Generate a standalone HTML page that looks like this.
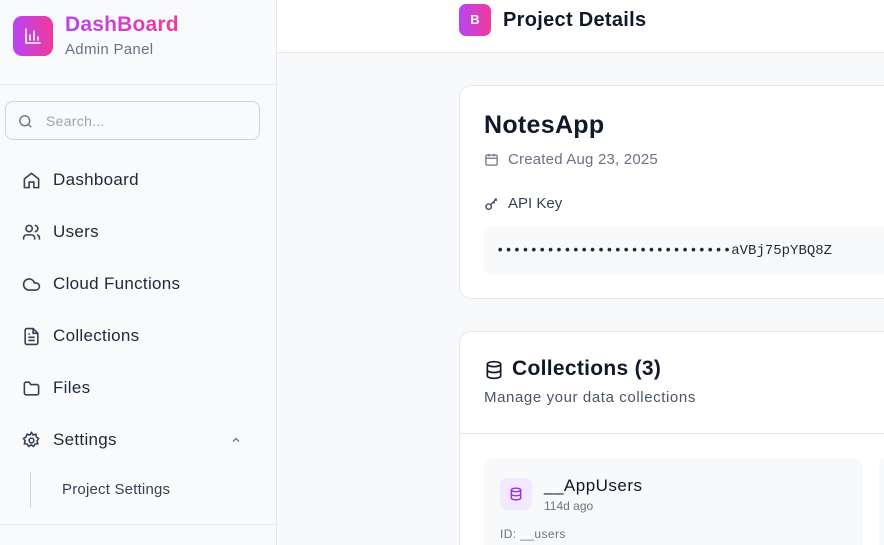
<!DOCTYPE html>
<html style="overflow:hidden;height:545px"><head><style>
*{box-sizing:border-box;margin:0;padding:0}
html,body{width:884px;height:545px;overflow:hidden}
body{font-family:"Liberation Sans",sans-serif;background:#f8f9fb;position:relative;color:#111827}
.sb{position:absolute;left:0;top:0;width:277px;height:545px;background:#f9fafb;border-right:1px solid #e5e7eb}
.logo{position:absolute;left:13px;top:16px;width:40px;height:40px;border-radius:9px;background:linear-gradient(90deg,#b845f5,#f0399b)}
.brand{position:absolute;left:65px;top:13px;font-size:21px;font-weight:bold;background:linear-gradient(90deg,#b845f5,#f0399b);-webkit-background-clip:text;color:transparent;letter-spacing:0.2px}
.sub{position:absolute;left:65px;top:41px;font-size:15px;color:#6b7280;letter-spacing:0.3px}
.hr{position:absolute;left:0;width:276px;height:1px;background:#e5e7eb}
.search{position:absolute;left:5px;top:101px;width:255px;height:39px;border:1px solid #d1d5db;border-radius:8px;background:#f9fafb}
.search span{position:absolute;left:40px;top:11px;font-size:14px;color:#9ca3af;letter-spacing:0.3px}
.nav{position:absolute;left:22px;font-size:17px;color:#1f2937;display:flex;align-items:center;letter-spacing:0.3px}
.nav svg{width:19px;height:19px;margin-right:12px}
.top{position:absolute;left:277px;top:0;right:0;height:53px;background:#fff;border-bottom:1px solid #e5e7eb}
.card{position:absolute;left:459px;width:425px;background:#fff;border:1px solid #e5e7eb;border-right:none;border-radius:12px 0 0 12px}
</style></head><body>
<div class="sb">
<div class="logo"><svg width="40" height="40" viewBox="0 0 40 40" fill="none" stroke="#fff" stroke-width="1.6" stroke-linecap="round"><path d="M13 13v14h14M17 24v-5M21 24v-9M25 24v-3"/></svg></div>
<div class="brand">DashBoard</div>
<div class="sub">Admin Panel</div>
<div class="hr" style="top:84px"></div>
<div class="search"><svg style="position:absolute;left:11px;top:11px" width="17" height="17" viewBox="0 0 24 24" fill="none" stroke="#6b7280" stroke-width="2"><circle cx="11" cy="11" r="7"/><path d="M20 20l-4-4"/></svg><span>Search...</span></div>
<div class="nav" style="top:170px"><svg viewBox="0 0 24 24" fill="none" stroke="#374151" stroke-width="2"><path d="M3 10l9-7 9 7v11h-6v-7H9v7H3z"/></svg>Dashboard</div>
<div class="nav" style="top:222px"><svg viewBox="0 0 24 24" fill="none" stroke="#374151" stroke-width="2"><circle cx="9" cy="7" r="4"/><path d="M2 21v-2a4 4 0 014-4h6a4 4 0 014 4v2M16 3a4 4 0 010 8M22 21v-2a4 4 0 00-3-4"/></svg>Users</div>
<div class="nav" style="top:274px"><svg viewBox="0 0 24 24" fill="none" stroke="#374151" stroke-width="2"><path d="M17.5 19H9a7 7 0 116.7-9h1.8a4.5 4.5 0 010 9z"/></svg>Cloud Functions</div>
<div class="nav" style="top:326px"><svg viewBox="0 0 24 24" fill="none" stroke="#374151" stroke-width="2"><path d="M14 2H6a2 2 0 00-2 2v16a2 2 0 002 2h12a2 2 0 002-2V8z"/><path d="M14 2v6h6M8 13h8M8 17h8M8 9h2"/></svg>Collections</div>
<div class="nav" style="top:378px"><svg viewBox="0 0 24 24" fill="none" stroke="#374151" stroke-width="2"><path d="M3 6a2 2 0 012-2h4l2 3h8a2 2 0 012 2v9a2 2 0 01-2 2H5a2 2 0 01-2-2z"/></svg>Files</div>
<div class="nav" style="top:430px"><svg viewBox="0 0 24 24" fill="none" stroke="#374151" stroke-width="2"><circle cx="12" cy="12" r="3"/><path d="M12 2l2 3 3.5-1 .5 3.5 3 2-2 3 1 3.5-3.5.5-2 3-3-2-3 2-2-3-3.5-.5 1-3.5-2-3 3-2L6.5 4 10 5z"/></svg>Settings</div>
<svg style="position:absolute;left:230px;top:434px" width="12" height="12" viewBox="0 0 24 24" fill="none" stroke="#6b7280" stroke-width="2.5"><path d="M6 15l6-6 6 6"/></svg>
<div style="position:absolute;left:30px;top:472px;width:1px;height:36px;background:#d1d5db"></div>
<div style="position:absolute;left:62px;top:481px;font-size:15px;color:#374151;letter-spacing:0.2px">Project Settings</div>
<div class="hr" style="top:524px"></div>
</div>
<div class="top">
<div style="position:absolute;left:182px;top:4px;width:32px;height:32px;border-radius:7px;background:linear-gradient(90deg,#b845f5,#f0399b);color:#fff;font-size:13px;font-weight:bold;text-align:center;line-height:32px">B</div>
<div style="position:absolute;left:226px;top:9px;font-size:20px;font-weight:bold;letter-spacing:0.3px">Project Details</div>
</div>
<div class="card" style="top:85px;height:214px">
<div style="position:absolute;left:24px;top:25px;font-size:25px;font-weight:bold;letter-spacing:0.3px">NotesApp</div>
<svg style="position:absolute;left:24px;top:66px" width="15" height="15" viewBox="0 0 24 24" fill="none" stroke="#6b7280" stroke-width="2"><rect x="3" y="5" width="18" height="16" rx="2"/><path d="M3 10h18M8 3v4M16 3v4"/></svg>
<div style="position:absolute;left:48px;top:65px;font-size:15px;color:#6b7280;letter-spacing:0.2px">Created Aug 23, 2025</div>
<svg style="position:absolute;left:24px;top:110px" width="16" height="16" viewBox="0 0 24 24" fill="none" stroke="#374151" stroke-width="2"><circle cx="7" cy="16" r="4"/><path d="M10 13l9-9M16 4l3 3M14 9l2 2"/></svg>
<div style="position:absolute;left:48px;top:109px;font-size:15px;color:#374151">API Key</div>
<div style="position:absolute;left:24px;top:141px;width:401px;height:48px;background:#f8f9fb;border-radius:8px 0 0 8px;font-family:'Liberation Mono',monospace;font-size:14px;line-height:48px;padding-left:12px;color:#1f2937">••••••••••••••••••••••••••••aVBj75pYBQ8Z</div>
</div>
<div class="card" style="top:331px;height:214px;border-bottom:none;border-radius:12px 0 0 0">
<svg style="position:absolute;left:24px;top:28px" width="20" height="20" viewBox="0 0 24 24" fill="none" stroke="#111827" stroke-width="2"><ellipse cx="12" cy="5" rx="8" ry="3"/><path d="M4 5v14c0 1.7 3.6 3 8 3s8-1.3 8-3V5M4 12c0 1.7 3.6 3 8 3s8-1.3 8-3"/></svg>
<div style="position:absolute;left:52px;top:25px;font-size:21px;font-weight:bold;letter-spacing:0.3px">Collections (3)</div>
<div style="position:absolute;left:24px;top:57px;font-size:15px;color:#4b5563;letter-spacing:0.6px">Manage your data collections</div>
<div style="position:absolute;left:0;top:101px;width:100%;height:1px;background:#e5e7eb"></div>
<div style="position:absolute;left:24px;top:126px;width:379px;height:88px;background:#f8f9fb;border-radius:10px 10px 0 0">
<div style="position:absolute;left:16px;top:20px;width:32px;height:32px;border-radius:7px;background:#f3e8ff"><svg style="position:absolute;left:9px;top:9px" width="14" height="14" viewBox="0 0 24 24" fill="none" stroke="#9333ea" stroke-width="2.5"><ellipse cx="12" cy="5" rx="8" ry="3"/><path d="M4 5v14c0 1.7 3.6 3 8 3s8-1.3 8-3V5M4 12c0 1.7 3.6 3 8 3s8-1.3 8-3"/></svg></div>
<div style="position:absolute;left:60px;top:18px;font-size:17px;color:#111827;letter-spacing:0.5px">__AppUsers</div>
<div style="position:absolute;left:60px;top:41px;font-size:12px;color:#6b7280">114d ago</div>
<div style="position:absolute;left:16px;top:69px;font-size:12px;color:#6b7280;letter-spacing:0.4px">ID: __users</div>
</div>
<div style="position:absolute;left:419px;top:126px;width:6px;height:88px;background:#f8f9fb;border-radius:10px 0 0 0"></div>
</div>
</body></html>
